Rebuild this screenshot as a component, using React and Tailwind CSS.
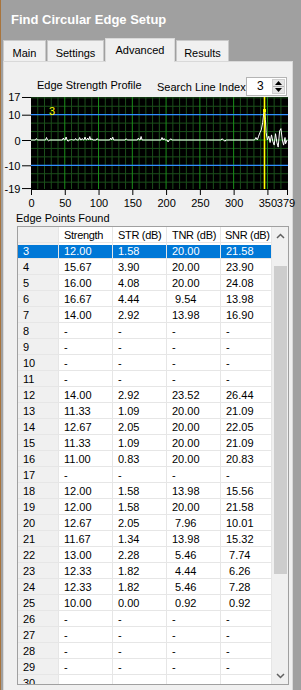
import React from 'react';

const FONT = { fontFamily: '"Liberation Sans", Arial, sans-serif' };

const rows = [
  ['3', '12.00', '1.58', '20.00', '21.58'],
  ['4', '15.67', '3.90', '20.00', '23.90'],
  ['5', '16.00', '4.08', '20.00', '24.08'],
  ['6', '16.67', '4.44', ' 9.54', '13.98'],
  ['7', '14.00', '2.92', '13.98', '16.90'],
  ['8', '-', '-', '-', '-'],
  ['9', '-', '-', '-', '-'],
  ['10', '-', '-', '-', '-'],
  ['11', '-', '-', '-', '-'],
  ['12', '14.00', '2.92', '23.52', '26.44'],
  ['13', '11.33', '1.09', '20.00', '21.09'],
  ['14', '12.67', '2.05', '20.00', '22.05'],
  ['15', '11.33', '1.09', '20.00', '21.09'],
  ['16', '11.00', '0.83', '20.00', '20.83'],
  ['17', '-', '-', '-', '-'],
  ['18', '12.00', '1.58', '13.98', '15.56'],
  ['19', '12.00', '1.58', '20.00', '21.58'],
  ['20', '12.67', '2.05', ' 7.96', '10.01'],
  ['21', '11.67', '1.34', '13.98', '15.32'],
  ['22', '13.00', '2.28', ' 5.46', ' 7.74'],
  ['23', '12.33', '1.82', ' 4.44', ' 6.26'],
  ['24', '12.33', '1.82', ' 5.46', ' 7.28'],
  ['25', '10.00', '0.00', ' 0.92', ' 0.92'],
  ['26', '-', '-', '-', '-'],
  ['27', '-', '-', '-', '-'],
  ['28', '-', '-', '-', '-'],
  ['29', '-', '-', '-', '-'],
  ['30', '', '', '', ''],
];

const colW = ['w-[41px]', 'w-[54px]', 'w-[54px]', 'w-[54px]', 'w-[51px]'];

// chart helpers, page coordinates
const X = (i) => 31 + (i * 256) / 379;
const Y = (v) => 141 - v * 2.53;

const bumps = [
  [8, 0.6], [23, 1], [26, -0.4], [48, 0.8], [52, 1.2], [55, -0.5], [60, 0.4],
  [66, 0.6], [72, 1], [76, 0.6], [80, 1.2], [84, 0.8], [87, 1.4], [90, 0.5],
  [98, 0.6], [118, 0.8], [121, 1.2], [141, 0.5], [159, 0.8], [163, 1.4],
  [194, 1], [197, 0.6], [203, -0.8], [207, 0.5], [283, 0.5], [287, -0.5],
];

const tail = [
  [331, 0], [333, 1], [335, 0], [337, 1.5], [339, 3], [341, 4], [343, 7],
  [345, 11.5], [346, 12], [347, 8], [348, 3], [350, 0], [352, 1.5], [354, -1],
  [356, 2], [358, -0.5], [360, -2], [362, 2.5], [364, -1], [366, -2.8],
  [368, 3.5], [370, 4.5], [372, 0], [374, -2], [376, 1], [377, -1.5], [379, 0],
];

function signalPath() {
  const pts = [[0, 0]];
  bumps.forEach(([i, v]) => {
    pts.push([i - 1.5, 0], [i, v], [i + 1.5, 0]);
  });
  tail.forEach((p) => pts.push(p));
  return pts.map(([i, v], k) => `${k ? 'L' : 'M'}${X(i).toFixed(1)} ${Y(v).toFixed(1)}`).join(' ');
}

function Chart() {
  const minorX = [];
  for (let i = 10; i < 379; i += 10) if (i % 50) minorX.push(i);
  const majorX = [50, 100, 150, 200, 250, 300, 350];
  const minorY = [];
  for (let k = -5; k <= 5; k++) if (k % 3) minorY.push((k * 10) / 3);
  const xLabels = [0, 50, 100, 150, 200, 250, 300, 350, 379];
  const yLabels = [17, 10, 0, -10, -19];

  return (
    <svg width="288" height="113" viewBox="4 97 288 113" className="block overflow-visible">
      <rect x="31" y="98" width="257" height="92" fill="#000" />
      {minorX.map((i) => (
        <line key={'mx' + i} x1={X(i)} x2={X(i)} y1="98" y2="190" stroke="#1b4f1b" strokeWidth="1" />
      ))}
      {minorY.map((v) => (
        <line key={'my' + v} x1="31" x2="288" y1={Y(v)} y2={Y(v)} stroke="#1b4f1b" strokeWidth="1" />
      ))}
      {majorX.map((i) => (
        <line key={'Mx' + i} x1={X(i)} x2={X(i)} y1="98" y2="190" stroke="#1a8f1a" strokeWidth="1" />
      ))}
      <line x1="31" x2="288" y1={Y(0)} y2={Y(0)} stroke="#1a8f1a" strokeWidth="1" />
      <line x1="31" x2="288" y1={Y(10)} y2={Y(10)} stroke="#2f8fff" strokeWidth="1.2" />
      <line x1="31" x2="288" y1={Y(-10)} y2={Y(-10)} stroke="#2f8fff" strokeWidth="1.2" />
      <path d={signalPath()} fill="none" stroke="#fff" strokeWidth="1" />
      <line x1="264.5" x2="264.5" y1="98" y2="191" stroke="#ffff00" strokeWidth="1.6" />
      <rect x="263" y="110" width="3" height="3" fill="#ffff00" />
      <text x="49" y="116" fill="#ffff00" fontSize="11" style={FONT}>3</text>

      {yLabels.map((v) => (
        <g key={'yl' + v}>
          <line x1="22" x2="31" y1={Y(v) + 0.5} y2={Y(v) + 0.5} stroke="#000" strokeWidth="1" />
          <text x="20.5" y={Y(v) + 4.5} textAnchor="end" fontSize="11" fill="#000" style={FONT}>{v}</text>
        </g>
      ))}
      <line x1="31" x2="288" y1="190.5" y2="190.5" stroke="#000" strokeWidth="1" />
      {xLabels.map((i) => (
        <g key={'xl' + i}>
          <line x1={X(i) + 0.5} x2={X(i) + 0.5} y1="190" y2="196" stroke="#000" strokeWidth="1" />
          <text x={X(i) + (i === 379 ? -1 : 0.5)} y="207.5" textAnchor="middle" fontSize="11" fill="#000" style={FONT}>{i}</text>
        </g>
      ))}
    </svg>
  );
}

function Chevron({ down }) {
  return (
    <svg width="9" height="6" viewBox="0 0 9 6">
      <path d={down ? 'M1 1 L4.5 4.5 L8 1' : 'M1 5 L4.5 1.5 L8 5'} fill="none" stroke="#606060" strokeWidth="1.5" />
    </svg>
  );
}

function Tab({ label, w, active }) {
  if (active) {
    return (
      <div className={`${w} h-[24px] bg-[#f0f0f0] border border-b-0 border-[#d9d9d9] flex justify-center pt-[5px] leading-[13px] relative z-10 mb-[-1px]`}>
        {label}
      </div>
    );
  }
  return (
    <div className={`${w} h-[21px] bg-[#f0f0f0] border border-b-0 border-[#c9c9c9] flex justify-center pt-[6px] leading-[13px]`}>
      {label}
    </div>
  );
}

export default function App() {
  return (
    <div style={FONT} className="w-[301px] h-[690px] bg-[#a0a0a0] border-l border-[#a8743c] overflow-hidden text-[11px] text-black">
      {/* title */}
      <div className="h-[37px] pl-[10px] pt-[3px] flex items-center text-white font-bold text-[13px]">
        Find Circular Edge Setup
      </div>

      {/* tabs */}
      <div className="h-[24px] pl-[2px] flex items-end gap-[1px]">
        <Tab label="Main" w="w-[43px]" />
        <Tab label="Settings" w="w-[57px]" />
        <Tab label="Advanced" w="w-[70px]" active />
        <Tab label="Results" w="w-[53px]" />
      </div>

      {/* panel */}
      <div className="ml-[2px] w-[290px] h-[629px] bg-[#f0f0f0] border border-b-0 border-[#d9d9d9]">
        <div className="mt-[15px] h-[19px] flex items-start">
          <div className="ml-[33px] w-[120px] mt-[2px] leading-[13px] whitespace-nowrap">Edge Strength Profile</div>
          <div className="w-[89px] mt-[4px] leading-[13px] whitespace-nowrap">Search Line Index</div>
          <div className="w-[41px] h-[19px] bg-white border border-[#b4b4b4] flex items-center">
            <span className="ml-[10px] w-[15px] leading-[13px] text-[12px]">3</span>
            <div className="w-[13px] h-[15px] flex flex-col border border-[#cfcfcf] bg-[#e6e6e6]">
              <div className="flex-1 flex items-center justify-center">
                <svg width="7" height="4" viewBox="0 0 7 4"><path d="M0 4 L3.5 0 L7 4Z" fill="#000" /></svg>
              </div>
              <div className="h-px bg-[#b0b0b0]" />
              <div className="flex-1 flex items-center justify-center">
                <svg width="7" height="4" viewBox="0 0 7 4"><path d="M0 0 L3.5 4 L7 0Z" fill="#000" /></svg>
              </div>
            </div>
          </div>
        </div>

        <Chart />

        <div className="mt-[3px] ml-[12px] h-[13px] leading-[13px]">Edge Points Found</div>

        {/* table */}
        <div className="mt-[1px] ml-[13px] w-[272px] h-[459px] border border-[#a0a0a0] bg-white flex overflow-hidden">
          <div className="w-[254px]">
            <div className="flex h-[16px]">
              {['', 'Strength', 'STR (dB)', 'TNR (dB)', 'SNR (dB)'].map((h, c) => (
                <div
                  key={c}
                  className={`${colW[c]} h-[16px] border-r border-b border-[#e6e6e6] pt-[2px] leading-[13px] whitespace-nowrap overflow-hidden tracking-[-0.3px] ${c === 4 ? 'pl-[4px]' : 'pl-[5px]'} ${c === 0 ? 'bg-[#f0f0f0]' : 'bg-white'}`}
                >
                  {h}
                </div>
              ))}
            </div>
            {rows.map((r, k) => (
              <div key={k} className="flex h-[16px]">
                {r.map((v, c) => (
                  <div
                    key={c}
                    className={`${colW[c]} h-[16px] border-r border-b border-[#e6e6e6] ${c === 0 ? 'bg-[#f0f0f0]' : 'bg-white'}`}
                  >
                    <div
                      className={`mt-[2px] h-[13px] pl-[5px] leading-[13px] whitespace-pre ${k === 0 ? 'bg-[#0078d7] text-white' : ''}`}
                    >
                      {v}
                    </div>
                  </div>
                ))}
              </div>
            ))}
          </div>
          <div className="w-[16px] bg-[#f0f0f0] flex flex-col">
            <div className="h-[17px] flex items-center justify-center">
              <Chevron />
            </div>
            <div className="mt-[22px] mx-auto w-[13px] h-[308px] bg-[#cdcdcd]" />
            <div className="flex-1" />
            <div className="h-[17px] flex items-center justify-center">
              <Chevron down />
            </div>
          </div>
        </div>
      </div>
    </div>
  );
}
